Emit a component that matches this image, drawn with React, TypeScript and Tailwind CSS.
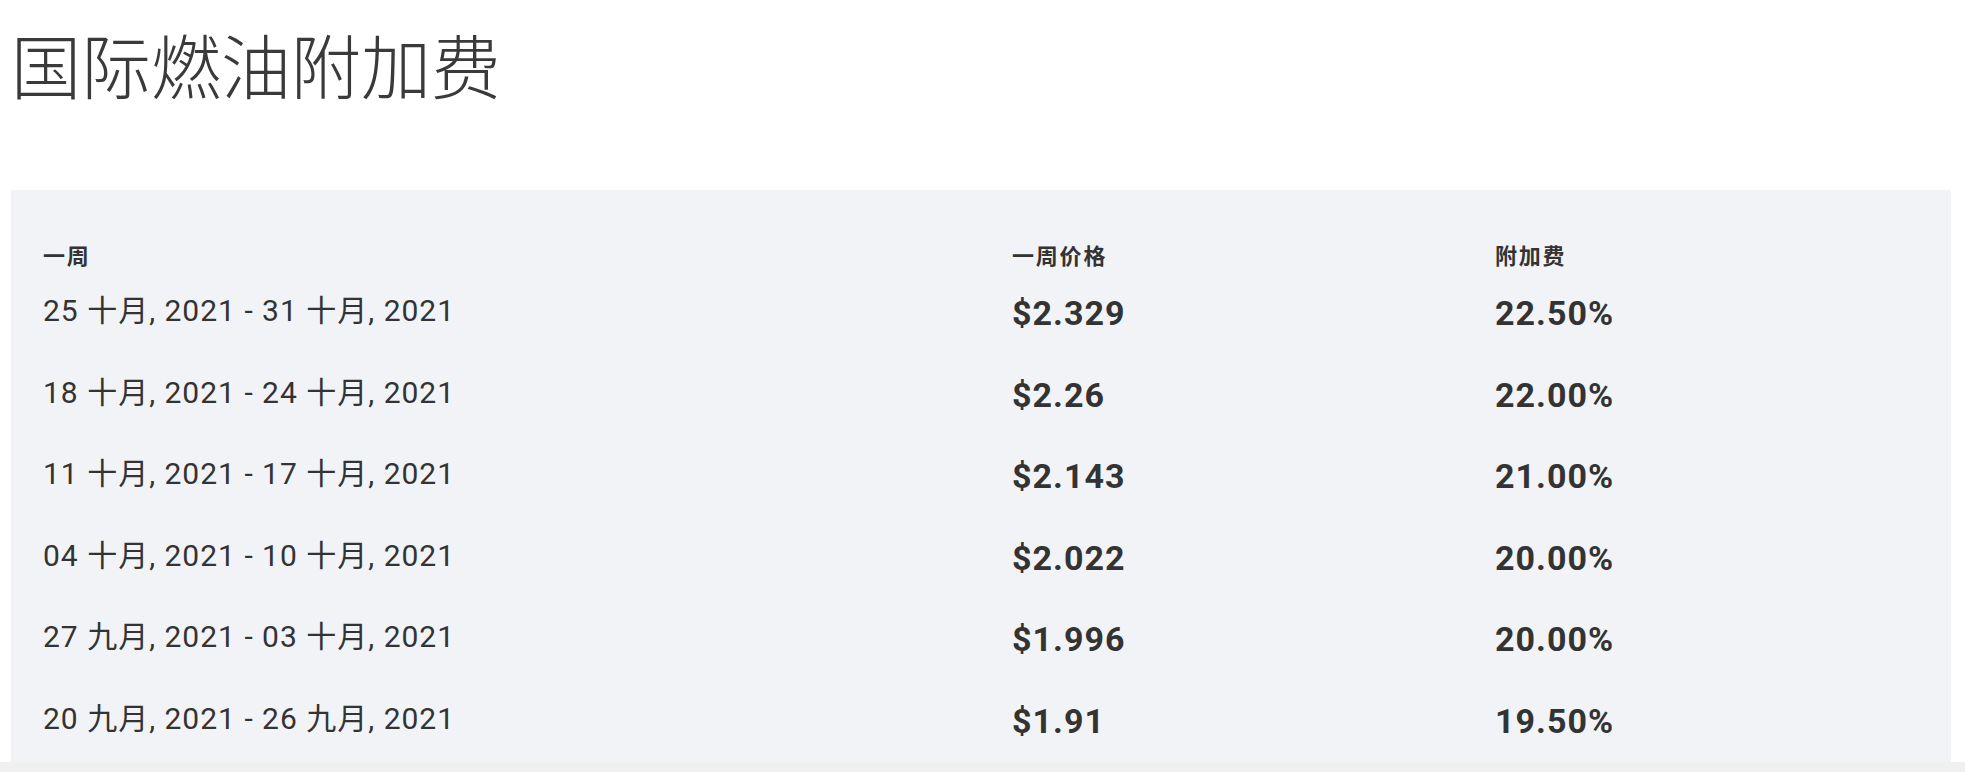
const rows = [
  { week: '25 十月, 2021 - 31 十月, 2021', price: '$2.329', fee: '22.50%' },
  { week: '18 十月, 2021 - 24 十月, 2021', price: '$2.26', fee: '22.00%' },
  { week: '11 十月, 2021 - 17 十月, 2021', price: '$2.143', fee: '21.00%' },
  { week: '04 十月, 2021 - 10 十月, 2021', price: '$2.022', fee: '20.00%' },
  { week: '27 九月, 2021 - 03 十月, 2021', price: '$1.996', fee: '20.00%' },
  { week: '20 九月, 2021 - 26 九月, 2021', price: '$1.91', fee: '19.50%' },
];

export default function App() {
  return (
    <div className="min-h-screen bg-white font-['Roboto','Noto_Sans_CJK_SC',sans-serif] text-[#333]">
      <div className="pl-[11px] pr-[14px]">
        <h1 className="pt-[35px] text-[70px] leading-[70px] font-light text-[#3a3a3a]">国际燃油附加费</h1>

        {/* surcharge table */}
        <div className="mt-[85px] bg-[#f2f3f7] px-[32px] pt-[52px]">
          <div className="grid h-[30px] grid-cols-[969px_483px_1fr] items-center text-[22px] font-bold leading-[30px] tracking-[1.8px]">
            <div>一周</div>
            <div>一周价格</div>
            <div>附加费</div>
          </div>
          {rows.map((r) => (
            <div key={r.week} className="grid h-[81.6px] grid-cols-[969px_483px_1fr] pt-[21px]">
              <div className="text-[30px] leading-[36px] tracking-[1px]">{r.week}</div>
              <div className="pt-[2px] text-[34px] font-bold leading-[36px] tracking-[1px]">{r.price}</div>
              <div className="pt-[2px] text-[34px] font-bold leading-[36px] tracking-[1px]">{r.fee}</div>
            </div>
          ))}
        </div>
      </div>
      <div className="h-[10px] bg-[#f0f0f0]" />
    </div>
  );
}
